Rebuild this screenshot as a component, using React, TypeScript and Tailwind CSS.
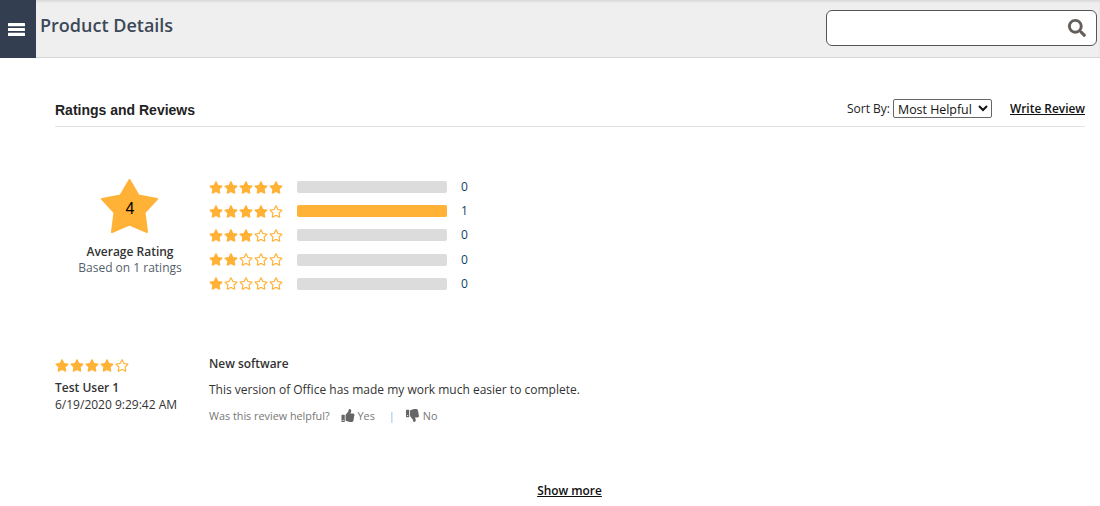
import React from 'react';
import { FaSearch, FaStar, FaRegStar, FaThumbsUp, FaThumbsDown } from 'react-icons/fa';

const RATING_ROWS = [
  { stars: 5, count: 0 },
  { stars: 4, count: 1 },
  { stars: 3, count: 0 },
  { stars: 2, count: 0 },
  { stars: 1, count: 0 },
];

const Stars: React.FC<{ filled: number }> = ({ filled }) => (
  <div className="flex w-[74px] shrink-0 justify-between text-[#ffb236]">
    {[1, 2, 3, 4, 5].map(n =>
      n <= filled ? <FaStar key={n} className="h-[13px] w-[14px]" /> : <FaRegStar key={n} className="h-[13px] w-[14px]" />
    )}
  </div>
);

const App: React.FC = () => {
  return (
    <div className="h-[506px] w-[1100px] overflow-hidden bg-white font-['Open_Sans',sans-serif] text-[#333]">
      <header className="flex h-[58px] border-b border-[#d5d5d5] bg-[#efefef] shadow-[inset_0_2px_2px_#dcdcdc]">
        <div className="-mb-px flex w-[36px] items-center justify-center bg-[#333f50] pr-[3px] pt-[1px] text-white">
          <svg viewBox="0 0 17 13" className="h-[13px] w-[17px] fill-current">
            <rect y="0" width="17" height="3.2" rx="0.5" />
            <rect y="4.9" width="17" height="3.2" rx="0.5" />
            <rect y="9.8" width="17" height="3.2" rx="0.5" />
          </svg>
        </div>
        <h1 className="ml-[4px] mt-[12px] text-[18px] font-semibold leading-[27px] text-[#3c4858]">Product Details</h1>
        <div className="ml-auto mr-[3px] mt-[10px] flex h-[36px] w-[271px] items-center justify-end rounded-[6px] border border-[#555] bg-white pr-[10px] text-[#655f5c]">
          <FaSearch className="h-[18px] w-[18px]" />
        </div>
      </header>

      <main className="px-[55px] pr-[15px]">
        <div className="mt-[35px] flex h-[34px] items-start border-b border-[#e3e3e3]">
          <h2 className="mt-[7px] font-['Liberation_Sans',sans-serif] text-[14px] font-bold leading-[20px] text-[#222]">Ratings and Reviews</h2>
          <span className="ml-auto mt-[7px] text-[12px] leading-[17px] text-[#222]">Sort By:</span>
          <select
            defaultValue="Most Helpful"
            className="ml-[3px] mt-[6px] h-[19px] w-[99px] rounded-[2px] border border-[#666] bg-white pb-[1px] text-[12.4px] leading-[14px] text-[#111] appearance-auto"
          >
            <option>Most Helpful</option>
          </select>
          <a className="ml-[18px] mt-[7px] text-[11.9px] font-semibold leading-[17px] text-[#111] underline">Write Review</a>
        </div>

        <section className="mt-[49px] flex">
          <div className="flex w-[154px] flex-col items-center pr-[4px]">
            <div className="relative mt-[3px] h-[54px] w-[58px]">
              <svg viewBox="0 0 58 54" className="h-full w-full fill-[#ffb236]">
                <path d="M28.5 1 L37.5 16.5 L56 20 L43.5 33.5 L46 53 L28.5 45.5 L11 53 L13.5 33.5 L1 20 L19.5 16.5 Z" strokeLinejoin="round" stroke="#ffb236" strokeWidth="2" />
              </svg>
              <span className="absolute inset-x-0 top-[20px] text-center font-['Liberation_Sans',sans-serif] text-[16px] leading-[20px] text-black">4</span>
            </div>
            <div className="mt-[10px] text-[12px] font-semibold leading-[17px] text-[#333]">Average Rating</div>
            <div className="text-[12px] leading-[16px] text-[#555f6b]">Based on 1 ratings</div>
          </div>
          <div className="mt-[5px] flex flex-col gap-[12.2px]">
            {RATING_ROWS.map(row => (
              <div key={row.stars} className="flex h-[12px] items-center">
                <Stars filled={row.stars} />
                <div className={`ml-[14px] h-[12px] w-[150px] rounded-[2px] ${row.count > 0 ? 'bg-[#ffb236]' : 'bg-[#dcdcdc]'}`} />
                <span className="ml-[14px] text-[12px] text-[#123f66]">{row.count}</span>
              </div>
            ))}
          </div>
        </section>

        <section className="mt-[69px] flex">
          <div className="w-[154px]">
            <Stars filled={4} />
            <div className="mt-[8px] text-[12px] font-semibold leading-[16px] text-[#333]">Test User 1</div>
            <div className="mt-[1px] text-[12px] leading-[16px] text-[#333]">6/19/2020 9:29:42 AM</div>
          </div>
          <div className="-mt-[4px]">
            <div className="text-[11.9px] font-semibold leading-[16px] text-[#333]">New software</div>
            <div className="mt-[11px] text-[12px] leading-[16px] text-[#333]">This version of Office has made my work much easier to complete.</div>
            <div className="mt-[10px] flex items-center text-[10.8px] leading-[16px] text-[#777]">
              <span>Was this review helpful?</span>
              <FaThumbsUp className="ml-[11px] h-[13px] w-[14px] text-[#666]" />
              <span className="ml-[3px]">Yes</span>
              <span className="ml-[14px] text-[#7fb8e6]">|</span>
              <FaThumbsDown className="ml-[11px] h-[13px] w-[13px] text-[#666]" />
              <span className="ml-[4px]">No</span>
            </div>
          </div>
        </section>

        <div className="mt-[53px] pr-[1px] text-center">
          <a className="text-[11.9px] font-semibold leading-[17px] text-[#111] underline">Show more</a>
        </div>
      </main>
    </div>
  );
};

export default App;
